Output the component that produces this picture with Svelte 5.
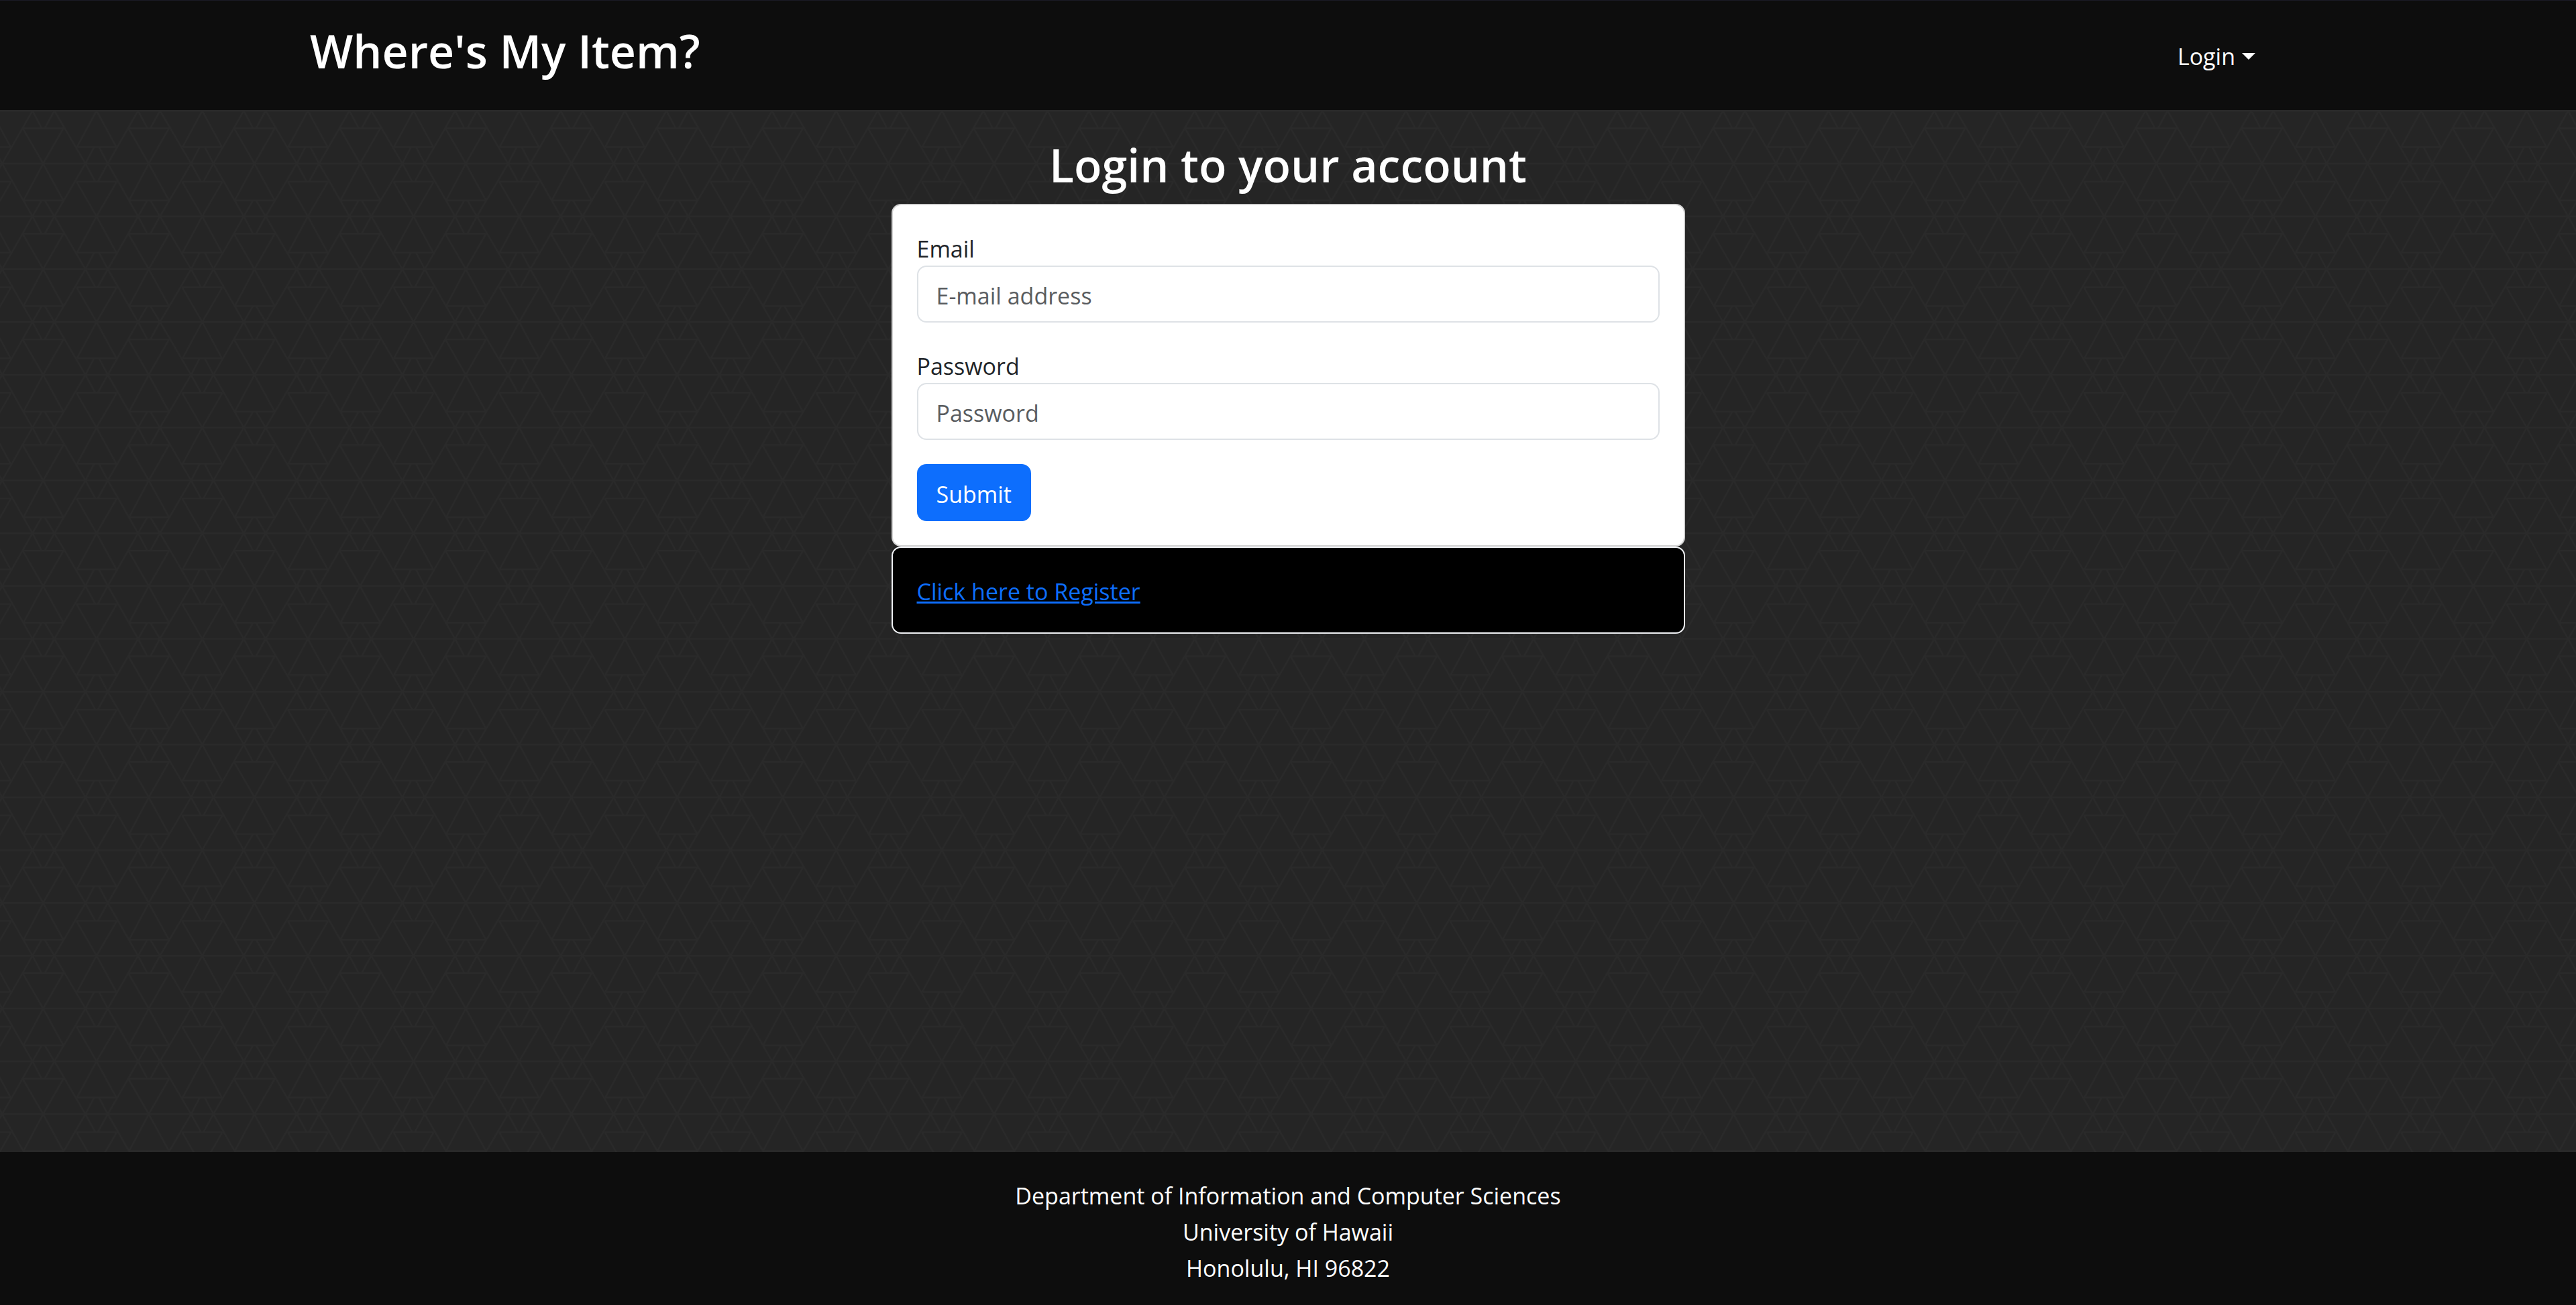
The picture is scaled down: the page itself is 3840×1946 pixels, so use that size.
<script>
  const address = [
    'Department of Information and Computer Sciences',
    'University of Hawaii',
    'Honolulu, HI 96822'
  ];

  const tileOffsets = [
    [0, 0],
    [-70, 0],
    [0, -70],
    [-70, -70]
  ];

  // Line work of one 70x70 background tile
  const lattice = [
    'M0 .5H70M0 35.5H70',
    'M15 12H42M51 24.5H77M50.7 47.5H77.3M15.5 60H42',
    'M21.5 .5L1.4 35.5L21.5 70.5M36 .5L56.6 35.5L36 70.5',
    'M51 24.5L64 .5L77 24.5M15 12L28.6 35.5L42 12',
    'M15.5 60L28.6 35.5L42 60M50.7 47.5L64 70.5L77.3 47.5',
    'M21.5 .5L27.6 12M36 .5L29.7 12M27.6 60L21.5 70.5M29.7 60L36 70.5',
    'M62.4 24.5L56.6 35.5L63.2 47.5M65.6 24.5L71.4 35.5L64.8 47.5'
  ].join('');

  let email = $state('');
  let password = $state('');
</script>

<div class="page">
  <header class="navbar">
    <div class="container">
      <a class="brand" href="#home"><h1>Where's My Item?</h1></a>
      <nav>
        <button class="toggle" type="button" aria-haspopup="menu">
          Login
          <svg class="caret" viewBox="0 0 20 10" aria-hidden="true"><path d="M0 0H20L10 10Z" /></svg>
        </button>
      </nav>
    </div>
  </header>

  <main>
    <svg class="backdrop" aria-hidden="true">
      <defs>
        <pattern id="lattice" width="70" height="70" patternUnits="userSpaceOnUse" patternTransform="scale(2.25)">
          {#each tileOffsets as [x, y]}
            <path d={lattice} transform={`translate(${x} ${y})`} />
          {/each}
        </pattern>
      </defs>
      <rect width="100%" height="100%" fill="url(#lattice)" />
    </svg>

    <section class="login">
      <h2>Login to your account</h2>
      <form class="card" onsubmit={(e) => e.preventDefault()}>
        <div class="field">
          <label for="email">Email</label>
          <input id="email" type="email" placeholder="E-mail address" bind:value={email} />
        </div>
        <div class="field">
          <label for="password">Password</label>
          <input id="password" type="password" placeholder="Password" bind:value={password} />
        </div>
        <button class="submit" type="submit">Submit</button>
      </form>
      <div class="card register">
        <a href="#signup">Click here to Register</a>
      </div>
    </section>
  </main>

  <footer>
    {#each address as line}
      <p>{line}</p>
    {/each}
  </footer>
</div>

<style>
  :global(body) {
    margin: 0;
  }

  .page,
  .page * {
    box-sizing: border-box;
  }

  .page {
    display: flex;
    flex-direction: column;
    min-height: 100vh;
    background: #252525;
    color: #fff;
    font-family: 'Open Sans', 'Segoe UI', sans-serif;
    font-size: 34px;
    line-height: 54px;
  }

  h1,
  h2,
  p {
    margin: 0;
  }

  h1,
  h2 {
    font-size: 68px;
    font-weight: 600;
    line-height: 86px;
  }

  input,
  button {
    font: inherit;
  }

  .navbar {
    padding: 32px 0 45px;
    border-top: 1px solid #1b1b26;
    background: #0d0d0d;
  }

  .container {
    display: flex;
    align-items: flex-start;
    justify-content: space-between;
    width: 100%;
    max-width: 2970px;
    margin: 0 auto;
    padding: 0 27px;
  }

  .brand {
    color: inherit;
    text-decoration: none;
  }

  nav {
    padding-top: 24px;
  }

  .toggle {
    display: flex;
    align-items: center;
    gap: 10px;
    padding: 0 16px;
    border: 0;
    background: none;
    color: inherit;
  }

  .caret {
    width: 20px;
    height: 10px;
    fill: currentColor;
  }

  main {
    position: relative;
    flex: 1;
    padding: 39px 27px 36px;
  }

  .backdrop {
    position: absolute;
    inset: 0;
    width: 100%;
    height: 100%;
    fill: none;
    stroke: #2a2a2a;
    stroke-width: 1;
  }

  .backdrop rect {
    stroke: none;
  }

  .login {
    position: relative;
    width: 100%;
    max-width: 1183px;
    margin: 0 auto;
  }

  h2 {
    margin-bottom: 15px;
    text-align: center;
  }

  .card {
    padding: 36px;
    border: 2px solid #d2d2d2;
    border-radius: 14px;
    background: #fff;
    color: #212529;
  }

  .field {
    margin-bottom: 36px;
  }

  label {
    display: block;
    padding-top: 4px;
    line-height: 50px;
  }

  input {
    display: block;
    width: 100%;
    height: 85px;
    padding: 4px 27px 0;
    border: 2px solid #dee2e6;
    border-radius: 14px;
    background: #fff;
    color: #212529;
  }

  input::placeholder {
    color: #595c5f;
    opacity: 1;
  }

  .submit {
    display: block;
    height: 85px;
    padding: 4px 29px 0;
    border: 0;
    border-radius: 14px;
    background: #0d6efd;
    color: #fff;
  }

  .register {
    padding: 38px 36px 34px;
    border-color: #f0f2f5;
    background: #000;
  }

  .register a {
    color: #0d6efd;
    text-decoration-thickness: 3px;
  }

  footer {
    padding: 38px 27px 28px;
    background: #0d0d0d;
    text-align: center;
  }
</style>
